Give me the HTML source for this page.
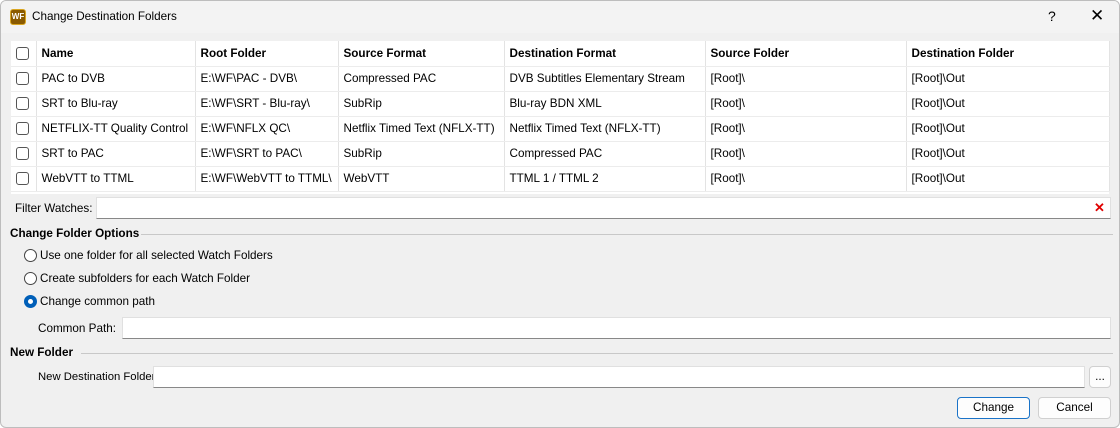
<!DOCTYPE html><html><head><style>
*{box-sizing:border-box}body{margin:0;width:1120px;height:428px;overflow:hidden;background:#fff;font-family:"Liberation Sans",sans-serif;font-size:11.7px;color:#000}
.win{position:absolute;left:0;top:0;width:1120px;height:428px;background:#f0f0f0;border:1px solid #bdbdbd;border-radius:6px;overflow:hidden}
.title{position:absolute;left:0;top:0;width:100%;height:32px;background:#f3f3f3}
.a{position:absolute;white-space:nowrap}
.tw{position:absolute;left:10px;top:40px;width:1098px;height:153px;background:#fff}
table{position:absolute;left:0;top:0;width:1098px;border-collapse:collapse;table-layout:fixed}
td{height:25px;border-right:1px solid #e3e3e3;border-bottom:1px solid #ececec;padding:0 5px;white-space:nowrap;overflow:hidden}
tr.h td{font-weight:bold}
.cb{display:inline-block;width:13px;height:13px;border:1px solid #555;border-radius:3px;background:#fff;vertical-align:middle}
.in{position:absolute;background:#fff;border:1px solid #e0e0e0;border-bottom:1px solid #888}
.rd{position:absolute;width:13px;height:13px;border:1px solid #444;border-radius:50%;background:#fff}
.rd.on{border:4px solid #005fb8}
.btn{position:absolute;background:#fdfdfd;border:1px solid #d0d0d0;border-radius:4px;text-align:center;line-height:20px}
.line{position:absolute;height:1px;background:#c8c8c8}
</style></head><body><div class="win">
<div class="title"></div>
<div class="a" style="left:9px;top:8px;width:16px;height:16px;background:#8a5a00;border-radius:3px;border:1px solid #d9a520;color:#fff;font-size:8px;font-weight:bold;line-height:14px;text-align:center">WF</div>
<div class="a" style="left:31px;top:9px">Change Destination Folders</div>
<div class="a" style="left:1047px;top:7px;font-size:14px">?</div>
<div class="a" style="left:1089px;top:5px;font-size:17px">✕</div>
<div class="tw"><table>
<colgroup><col style="width:25px"><col style="width:159px"><col style="width:143px"><col style="width:166px"><col style="width:201px"><col style="width:201px"><col style="width:203px"></colgroup>
<tr class="h"><td><span class="cb"></span></td><td>Name</td><td>Root Folder</td><td>Source Format</td><td>Destination Format</td><td>Source Folder</td><td>Destination Folder</td></tr>
<tr><td><span class="cb"></span></td><td>PAC to DVB</td><td>E:\WF\PAC - DVB\</td><td>Compressed PAC</td><td>DVB Subtitles Elementary Stream</td><td>[Root]\</td><td>[Root]\Out</td></tr>
<tr><td><span class="cb"></span></td><td>SRT to Blu-ray</td><td>E:\WF\SRT - Blu-ray\</td><td>SubRip</td><td>Blu-ray BDN XML</td><td>[Root]\</td><td>[Root]\Out</td></tr>
<tr><td><span class="cb"></span></td><td>NETFLIX-TT Quality Control</td><td>E:\WF\NFLX QC\</td><td>Netflix Timed Text (NFLX-TT)</td><td>Netflix Timed Text (NFLX-TT)</td><td>[Root]\</td><td>[Root]\Out</td></tr>
<tr><td><span class="cb"></span></td><td>SRT to PAC</td><td>E:\WF\SRT to PAC\</td><td>SubRip</td><td>Compressed PAC</td><td>[Root]\</td><td>[Root]\Out</td></tr>
<tr><td><span class="cb"></span></td><td>WebVTT to TTML</td><td>E:\WF\WebVTT to TTML\</td><td>WebVTT</td><td>TTML 1 / TTML 2</td><td>[Root]\</td><td>[Root]\Out</td></tr>
</table></div>
<div class="a" style="left:14px;top:201px">Filter Watches:</div>
<div class="in" style="left:95px;top:196px;width:1015px;height:22px"></div>
<div class="a" style="left:1093px;top:199px;color:#e00000;font-weight:bold;font-size:13px">✕</div>
<div class="a" style="left:9px;top:226px;font-weight:bold">Change Folder Options</div>
<div class="line" style="left:140px;top:233px;width:972px"></div>
<div class="rd" style="left:23px;top:248px"></div><div class="a" style="left:39px;top:248px">Use one folder for all selected Watch Folders</div>
<div class="rd" style="left:23px;top:271px"></div><div class="a" style="left:39px;top:271px">Create subfolders for each Watch Folder</div>
<div class="rd on" style="left:23px;top:294px"></div><div class="a" style="left:39px;top:294px">Change common path</div>
<div class="a" style="left:37px;top:321px">Common Path:</div>
<div class="in" style="left:121px;top:316px;width:989px;height:22px"></div>
<div class="a" style="left:9px;top:345px;font-weight:bold">New Folder</div>
<div class="line" style="left:80px;top:352px;width:1032px"></div>
<div class="a" style="left:37px;top:370px;font-size:11.3px">New Destination Folder:</div>
<div class="in" style="left:152px;top:365px;width:932px;height:22px"></div>
<div class="btn" style="left:1088px;top:365px;width:22px;height:22px">...</div>
<div class="btn" style="left:956px;top:396px;width:73px;height:22px;border-color:#1a73c8">Change</div>
<div class="btn" style="left:1037px;top:396px;width:73px;height:22px">Cancel</div>
</div></body></html>
